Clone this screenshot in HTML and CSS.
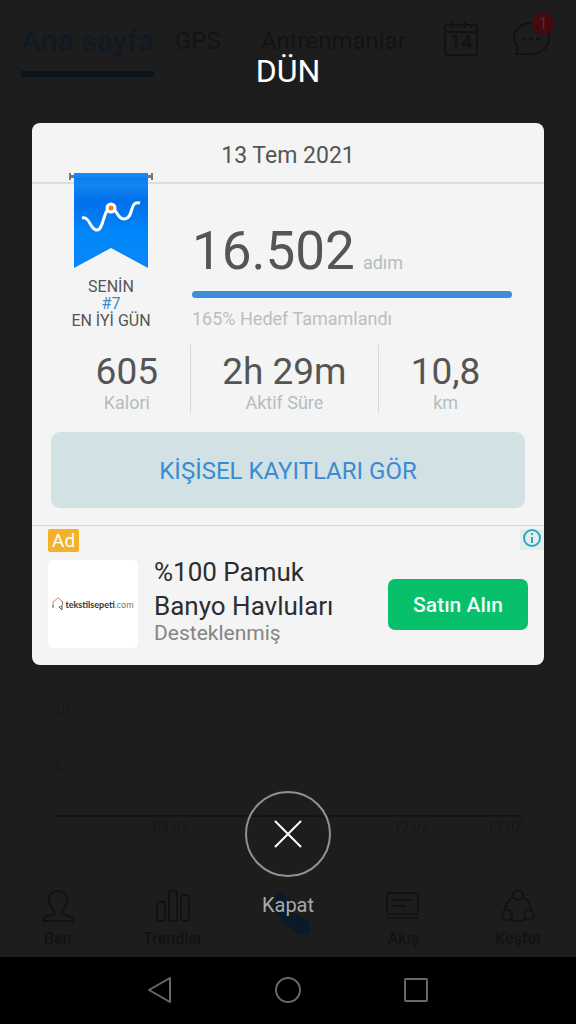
FILE: index.html
```html
<!DOCTYPE html>
<html lang="tr">
<head>
<meta charset="utf-8">
<meta name="viewport" content="width=device-width, initial-scale=1">
<title>Dün</title>
<link rel="stylesheet" href="styles.css">
</head>
<body>
<div class="screen">
  <div class="app">
    <div class="page">
      <header class="topbar">
        <nav class="tabs">
          <a class="tab tab-active" href="#">Ana sayfa</a>
          <a class="tab" href="#">GPS</a>
          <a class="tab tab-wide" href="#">Antrenmanlar</a>
        </nav>
        <button class="icon-button" type="button" aria-label="Takvim">
          <svg width="36" height="36" viewBox="0 0 36 36" fill="none" stroke="currentColor" stroke-width="2">
            <rect x="2" y="4" width="32" height="30" rx="2"/>
            <path d="M2 11h32M9 1v6M15 4v3M22 1v6M28 4v3"/>
            <text class="calendar-day" x="18" y="28" text-anchor="middle">14</text>
          </svg>
        </button>
        <button class="icon-button chat" type="button" aria-label="Mesajlar">
          <svg width="38" height="36" viewBox="0 0 38 36" fill="none" stroke="currentColor" stroke-width="2">
            <path d="M19 2C9 2 2 9 2 17c0 5 2 7 4 9l-2 7h15c10 0 18-7 18-15S29 2 19 2z"/>
            <g fill="currentColor" stroke="none"><circle cx="12" cy="18" r="2"/><circle cx="19" cy="18" r="2"/><circle cx="26" cy="18" r="2"/></g>
          </svg>
          <span class="badge">1</span>
        </button>
      </header>
      <div class="chart">
        <div class="plot"><span class="tick">10</span><span class="tick">5</span></div>
        <div class="axis"><span>08.07</span><span>12.07</span><span>13.07</span></div>
      </div>
      <nav class="bottom-tabs">
        <a class="bottom-tab" href="#">
          <svg width="36" height="36" viewBox="0 0 36 36" fill="none" stroke="currentColor" stroke-width="2"><path d="M14 22c-3-3-5-6-5-11 0-6 4-9 9-9s9 3 9 9c0 5-2 8-5 11v3c5 2 11 2 11 7H3c0-5 6-5 11-7z"/></svg>
          <span>Ben</span>
        </a>
        <a class="bottom-tab" href="#">
          <svg width="36" height="36" viewBox="0 0 36 36" fill="none" stroke="currentColor" stroke-width="2"><rect x="2" y="13" width="8" height="19" rx="2"/><rect x="14" y="2" width="8" height="30" rx="2"/><rect x="26" y="6" width="8" height="26" rx="2"/></svg>
          <span>Trendler</span>
        </a>
        <a class="bottom-tab bottom-tab-active" href="#" aria-label="Günlük">
          <svg width="44" height="48" viewBox="0 0 44 48" fill="currentColor"><path d="M13 3c6 0 7 3 7 8l4-2 4 9-2 6c7 1 19 8 19 15 0 5-4 8-10 7C27 43 15 34 9 22L6 17c3-1 6-3 5-6-1-4-1-6 2-8z"/></svg>
        </a>
        <a class="bottom-tab" href="#">
          <svg width="36" height="36" viewBox="0 0 36 36" fill="none" stroke="currentColor" stroke-width="2"><rect x="2" y="4" width="31" height="21" rx="2"/><path d="M6 11h22M6 17h15M2 29h31"/></svg>
          <span>Akış</span>
        </a>
        <a class="bottom-tab" href="#">
          <svg width="36" height="36" viewBox="0 0 36 36" fill="none" stroke="currentColor" stroke-width="2"><circle cx="18" cy="6" r="5"/><circle cx="7" cy="26" r="5"/><circle cx="29" cy="26" r="5"/><path d="M13 8c-5 3-7 7-8 13M23 8c5 3 7 7 8 13M11 30c4 3 10 3 14 0"/></svg>
          <span>Keşfet</span>
        </a>
      </nav>
    </div>

    <main class="dialog" role="dialog" aria-labelledby="dialog-title">
      <h1 class="dialog-title" id="dialog-title">DÜN</h1>
      <section class="card">
        <h2 class="card-date">13 Tem 2021</h2>
        <div class="summary">
          <div class="award">
            <svg class="ribbon" width="86" height="98" viewBox="0 0 86 98">
              <defs>
                <linearGradient id="ribbon-fill" x1="0" y1="0" x2="0" y2="1">
                  <stop offset="0" stop-color="#1689f5"/>
                  <stop offset=".08" stop-color="#0a84f2"/>
                  <stop offset=".12" stop-color="#1685f2"/>
                  <stop offset=".3" stop-color="#0070ec"/>
                  <stop offset=".65" stop-color="#0088fb"/>
                  <stop offset="1" stop-color="#0a86f8"/>
                </linearGradient>
              </defs>
              <path d="M2 1v7M84 1v7" stroke="#777" stroke-width="2"/>
              <path d="M3 3h80v3H3z" fill="#777"/>
              <path d="M6 1h74v95L43 76 6 96z" fill="url(#ribbon-fill)"/>
              <path d="M6 7h74" stroke="#0668cf" stroke-opacity=".6"/>
              <path d="M14 46C22 44 22 58 29 58C36 58 35 36 43 36C49 36 49 48 57 47C66 46 61 28 72 31" fill="none" stroke="#fff" stroke-width="3"/>
              <circle cx="43" cy="36" r="4" fill="#f47b20" stroke="#fff" stroke-width="3"/>
            </svg>
            <p class="award-text">SENİN<br><span class="rank">#7</span><br>EN İYİ GÜN</p>
          </div>
          <div class="steps">
            <p class="steps-value">16.502<span class="steps-unit">adım</span></p>
            <div class="progress"></div>
            <p class="goal">165% Hedef Tamamlandı</p>
          </div>
        </div>
        <dl class="stats">
          <div class="stat"><dd>605</dd><dt>Kalori</dt></div>
          <div class="stat"><dd>2h 29m</dd><dt>Aktif Süre</dt></div>
          <div class="stat"><dd>10,8</dd><dt>km</dt></div>
        </dl>
        <button class="records" type="button">KİŞİSEL KAYITLARI GÖR</button>
        <aside class="ad">
          <div class="ad-bar">
            <span class="ad-label">Ad</span>
            <a class="ad-info" href="#" aria-label="Reklam bilgisi">
              <svg width="20" height="20" viewBox="0 0 20 20" fill="none" stroke="#28a9bd" stroke-width="2"><circle cx="10" cy="9" r="8"/><path d="M10 8v6M10 4v2"/></svg>
            </a>
          </div>
          <div class="ad-row">
            <div class="ad-logo">
              <svg width="12" height="14" viewBox="0 0 12 14" fill="none"><path d="M1 9V5l5-4 4 3" stroke="#d98570"/><path d="M1 11V8M10 4c2 4-1 6-3 6l3 3V9" stroke="#555"/></svg>
              <span><b>tekstilsepeti</b>.com</span>
            </div>
            <div class="ad-text">
              <p class="ad-title">%100 Pamuk Banyo Havluları</p>
              <p class="ad-sponsor">Desteklenmiş</p>
            </div>
            <button class="buy" type="button">Satın Alın</button>
          </div>
        </aside>
      </section>
      <button class="close" type="button">
        <span class="close-ring">
          <svg width="30" height="30" viewBox="0 0 30 30" fill="none" stroke="#fff" stroke-width="2"><path d="M2 2l26 26M28 2L2 28"/></svg>
        </span>
        <span>Kapat</span>
      </button>
    </main>
  </div>

  <nav class="system-bar">
    <button class="system-button" type="button" aria-label="Geri"><svg width="28" height="28" viewBox="0 0 28 28" fill="none" stroke="currentColor" stroke-width="2" stroke-linejoin="round"><path d="M24 2v24L3 14z"/></svg></button>
    <button class="system-button" type="button" aria-label="Ana ekran"><svg width="28" height="28" viewBox="0 0 28 28" fill="none" stroke="currentColor" stroke-width="2"><circle cx="14" cy="14" r="12"/></svg></button>
    <button class="system-button" type="button" aria-label="Son uygulamalar"><svg width="28" height="28" viewBox="0 0 28 28" fill="none" stroke="currentColor" stroke-width="2"><rect x="3" y="3" width="22" height="22" rx="1"/></svg></button>
  </nav>
</div>
</body>
</html>
```
FILE: styles.css
```css
* { box-sizing: border-box; }
body, h1, h2, p, dl, dd, dt { margin: 0; font-weight: 400; }
body { background: #000; font-family: Roboto, "Noto Sans", sans-serif; }
a { color: inherit; text-decoration: none; }
button { border: 0; padding: 0; background: none; color: inherit; font: inherit; cursor: pointer; }
svg { display: block; }

.screen { display: flex; flex-direction: column; min-height: 100vh; }
.app { position: relative; flex: 1; display: flex; background: #1d1d1d; }

/* Dimmed page below the dialog */
.page { position: absolute; inset: 0; display: flex; flex-direction: column; color: #121212; overflow: hidden; }
.topbar { display: flex; align-items: flex-start; gap: 33px; padding: 21px 26px 0 21px; }
.tabs { flex: 1; display: flex; gap: 21px; padding-top: 2px; font-size: 24px; line-height: 36px; white-space: nowrap; }
.tab { color: #131313; }
.tab-wide { margin-left: 19px; }
.tab-active { padding-bottom: 12px; border-bottom: 6px solid #0b131a; color: #0f1a24; font-size: 30px; font-weight: 500; }
.icon-button { position: relative; flex: none; }
.calendar-day { font-size: 20px; font-weight: 500; fill: #121212; stroke: none; }
.badge { position: absolute; top: -8px; right: -4px; width: 22px; border-radius: 11px; background: #430b0d; color: #5c2a2a; font-size: 16px; line-height: 22px; }
.chart { flex: 1; display: flex; flex-direction: column; justify-content: flex-end; padding: 0 54px 52px; color: #171717; font-size: 14px; line-height: 20px; }
.plot { display: grid; gap: 36px; padding-bottom: 38px; border-bottom: 2px solid #141414; }
.axis { display: grid; grid-template-columns: 3fr 1fr 1fr; text-align: right; }
.axis span:first-child { padding-right: 48px; text-align: center; }
.bottom-tabs { display: grid; grid-template-columns: repeat(5, 1fr); height: 68px; }
.bottom-tab { display: flex; flex-direction: column; align-items: center; gap: 4px; font-size: 16px; line-height: 20px; font-weight: 500; }
.bottom-tab-active { color: #0b1a28; }

/* Dialog */
.dialog { position: relative; flex: 1; display: flex; flex-direction: column; align-items: center; padding: 51px 32px 40px; }
.dialog-title { color: #fff; font-size: 32px; line-height: 40px; }
.card { width: 100%; margin-top: 32px; border-radius: 8px; background: #f4f4f4; color: #555; }
.card-date { padding: 17px 0 10px; border-bottom: 2px solid #ddd; font-size: 23px; line-height: 32px; text-align: center; }
.summary { display: flex; padding: 0 32px 0 36px; }
.award { width: 86px; margin-top: -12px; }
.award-text { margin-top: 8px; font-size: 16px; line-height: 17px; text-align: center; white-space: nowrap; }
.rank { color: #3b8bd2; }
.steps { flex: 1; margin-left: 38px; padding-top: 37px; }
.steps-value { display: flex; align-items: baseline; gap: 8px; font-size: 53px; line-height: 60px; white-space: nowrap; }
.steps-unit { color: #b3bdc1; font-size: 18px; line-height: 24px; }
.progress { height: 7px; margin-top: 10px; border-radius: 4px; background: #3b8ed8; }
.goal { margin-top: 9px; color: #babec0; font-size: 18px; line-height: 24px; }
.stats { display: flex; margin-top: 14px; padding: 0 32px; text-align: center; }
.stat { flex: 1 1 auto; padding-top: 7px; height: 68px; }
.stat + .stat { border-left: 1px solid #d6d8d9; }
.stat dd { font-size: 37px; line-height: 40px; }
.stat dt { color: #b3bdc1; font-size: 18px; line-height: 22px; }
.records { display: block; width: calc(100% - 38px); margin: 19px 19px 17px; padding: 23px 0 21px; border-radius: 9px; background: #d1e1e4; color: #3b8bd2; font-size: 24px; line-height: 32px; }

/* Sponsored block */
.ad { border-top: 1px solid #d6d8d8; padding: 3px 0 17px; }
.ad-bar { display: flex; justify-content: space-between; align-items: flex-start; padding-left: 16px; }
.ad-label { padding: 0 4px; border-radius: 2px; background: #f6b12a; color: #fff; font-size: 19px; line-height: 23px; }
.ad-info { padding: 0 2px 1px; background: #e4eced; }
.ad-row { display: flex; align-items: center; padding: 8px 16px 0; }
.ad-logo { display: flex; align-items: center; justify-content: center; gap: 1px; width: 90px; height: 88px; border-radius: 5px; background: #fff; color: #777; font-family: Lato, sans-serif; font-size: 9px; }
.ad-logo b { color: #333; }
.ad-text { flex: 1; margin: -5px 0 5px 16px; }
.ad-title { max-width: 200px; color: #2b2d30; font-size: 26px; line-height: 34px; }
.ad-sponsor { color: #858585; font-size: 21px; line-height: 20px; }
.buy { padding: 14px 25px 13px; border-radius: 7px; background: #08bf6c; color: #effcf5; font-size: 21px; line-height: 24px; font-weight: 500; }

.close { display: flex; flex-direction: column; align-items: center; gap: 16px; margin-top: auto; color: #aaa; font-size: 20px; line-height: 24px; }
.close-ring { display: grid; place-items: center; width: 86px; height: 86px; border: 2px solid #929292; border-radius: 50%; }

/* Android navigation */
.system-bar { display: flex; justify-content: center; gap: 100px; padding: 19px 0 20px; background: #000; color: #686868; }
.system-button { flex: none; }
```
